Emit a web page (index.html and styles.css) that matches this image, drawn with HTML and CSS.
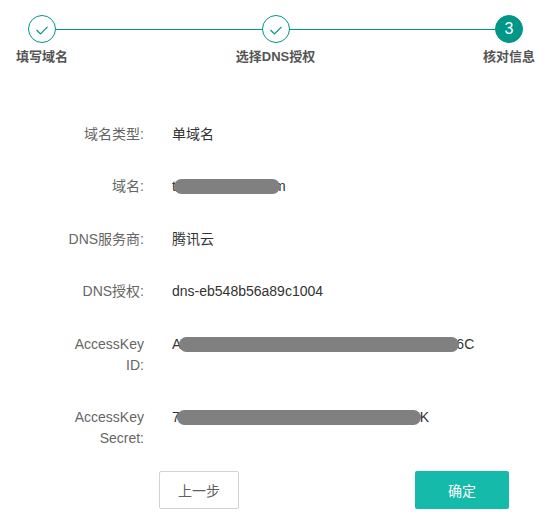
FILE: index.html
```html
<!DOCTYPE html>
<html lang="zh-CN">
<head>
<meta charset="utf-8">
<title>核对信息</title>
<link rel="stylesheet" href="styles.css">
</head>
<body>
<div class="steps">
  <div class="step">
    <div class="dot"><svg class="check" width="26" height="26" viewBox="0 0 26 26"><polyline points="7.5,14 11.5,18 18.5,10.8" fill="none" stroke="#009688" stroke-width="1.2"/></svg></div>
    <div class="title">填写域名</div>
  </div>
  <div class="line"></div>
  <div class="step">
    <div class="dot"><svg class="check" width="26" height="26" viewBox="0 0 26 26"><polyline points="7.5,14 11.5,18 18.5,10.8" fill="none" stroke="#009688" stroke-width="1.2"/></svg></div>
    <div class="title">选择DNS授权</div>
  </div>
  <div class="line"></div>
  <div class="step current">
    <div class="dot">3</div>
    <div class="title">核对信息</div>
  </div>
</div>

<div class="form">
  <div class="row"><div class="label">域名类型:</div><div class="value">单域名</div></div>
  <div class="row"><div class="label">域名:</div><div class="value">t<span class="redact redact-domain"></span>m</div></div>
  <div class="row"><div class="label">DNS服务商:</div><div class="value">腾讯云</div></div>
  <div class="row"><div class="label">DNS授权:</div><div class="value">dns-eb548b56a89c1004</div></div>
  <div class="row"><div class="label">AccessKey ID:</div><div class="value">A<span class="redact redact-id"></span>6C</div></div>
  <div class="row"><div class="label">AccessKey Secret:</div><div class="value">7<span class="redact redact-secret"></span>K</div></div>
</div>

<div class="actions">
  <button class="btn btn-plain" type="button">上一步</button>
  <button class="btn btn-primary" type="button">确定</button>
</div>
</body>
</html>
```

FILE: styles.css
```css
body {
  margin: 0;
  background: #fff;
  font-family: "Liberation Sans", "Noto Sans CJK SC", sans-serif;
}

.steps {
  display: flex;
  padding-top: 15px;
}

.step {
  width: 84px;
  display: flex;
  flex-direction: column;
  align-items: center;
  position: relative;
  z-index: 1;
}

.dot {
  width: 28px;
  height: 28px;
  box-sizing: border-box;
  border: 1px solid #009688;
  border-radius: 50%;
  background: #fff;
  display: flex;
  align-items: center;
  justify-content: center;
}

.check {
  display: block;
}

.current .dot {
  background: #009688;
  color: #fff;
  font-size: 16px;
  line-height: 1;
}

.line {
  flex: 1;
  height: 1px;
  background: #009688;
  margin: 14px -28px 0;
}

.title {
  margin-top: 5px;
  font-size: 13px;
  line-height: 18px;
  font-weight: bold;
  color: #555;
  white-space: nowrap;
}

.form {
  margin-top: 57.5px;
}

.row {
  display: flex;
  font-size: 14px;
  line-height: 21px;
  margin-bottom: 31.5px;
}

.row:last-child {
  margin-bottom: 0;
}

.label {
  flex-shrink: 0;
  width: 80px;
  margin-left: 64px;
  text-align: right;
  color: #666;
}

.value {
  margin-left: 28px;
  color: #333;
  white-space: nowrap;
}

.redact {
  display: inline-block;
  position: relative;
  height: 15px;
  border-radius: 8px;
  background: #808080;
  vertical-align: -3px;
}

.redact-domain {
  width: 106px;
  margin-left: -2px;
  margin-right: -6px;
}

.redact-id {
  width: 280px;
  margin-left: -2px;
  margin-right: -3px;
}

.redact-secret {
  width: 244px;
  margin-left: -3px;
  margin-right: -1px;
}

.actions {
  display: flex;
  justify-content: space-between;
  padding: 0 42px 0 159px;
  margin-top: 21.5px;
}

.btn {
  height: 38px;
  padding: 0;
  font-family: inherit;
  font-size: 14px;
  border-radius: 2px;
  cursor: pointer;
}

.btn-plain {
  width: 80px;
  border: 1px solid #d2d2d2;
  background: #fff;
  color: #5f5f5f;
}

.btn-primary {
  width: 94px;
  border: 0;
  background: #16baaa;
  color: #fff;
}
```
